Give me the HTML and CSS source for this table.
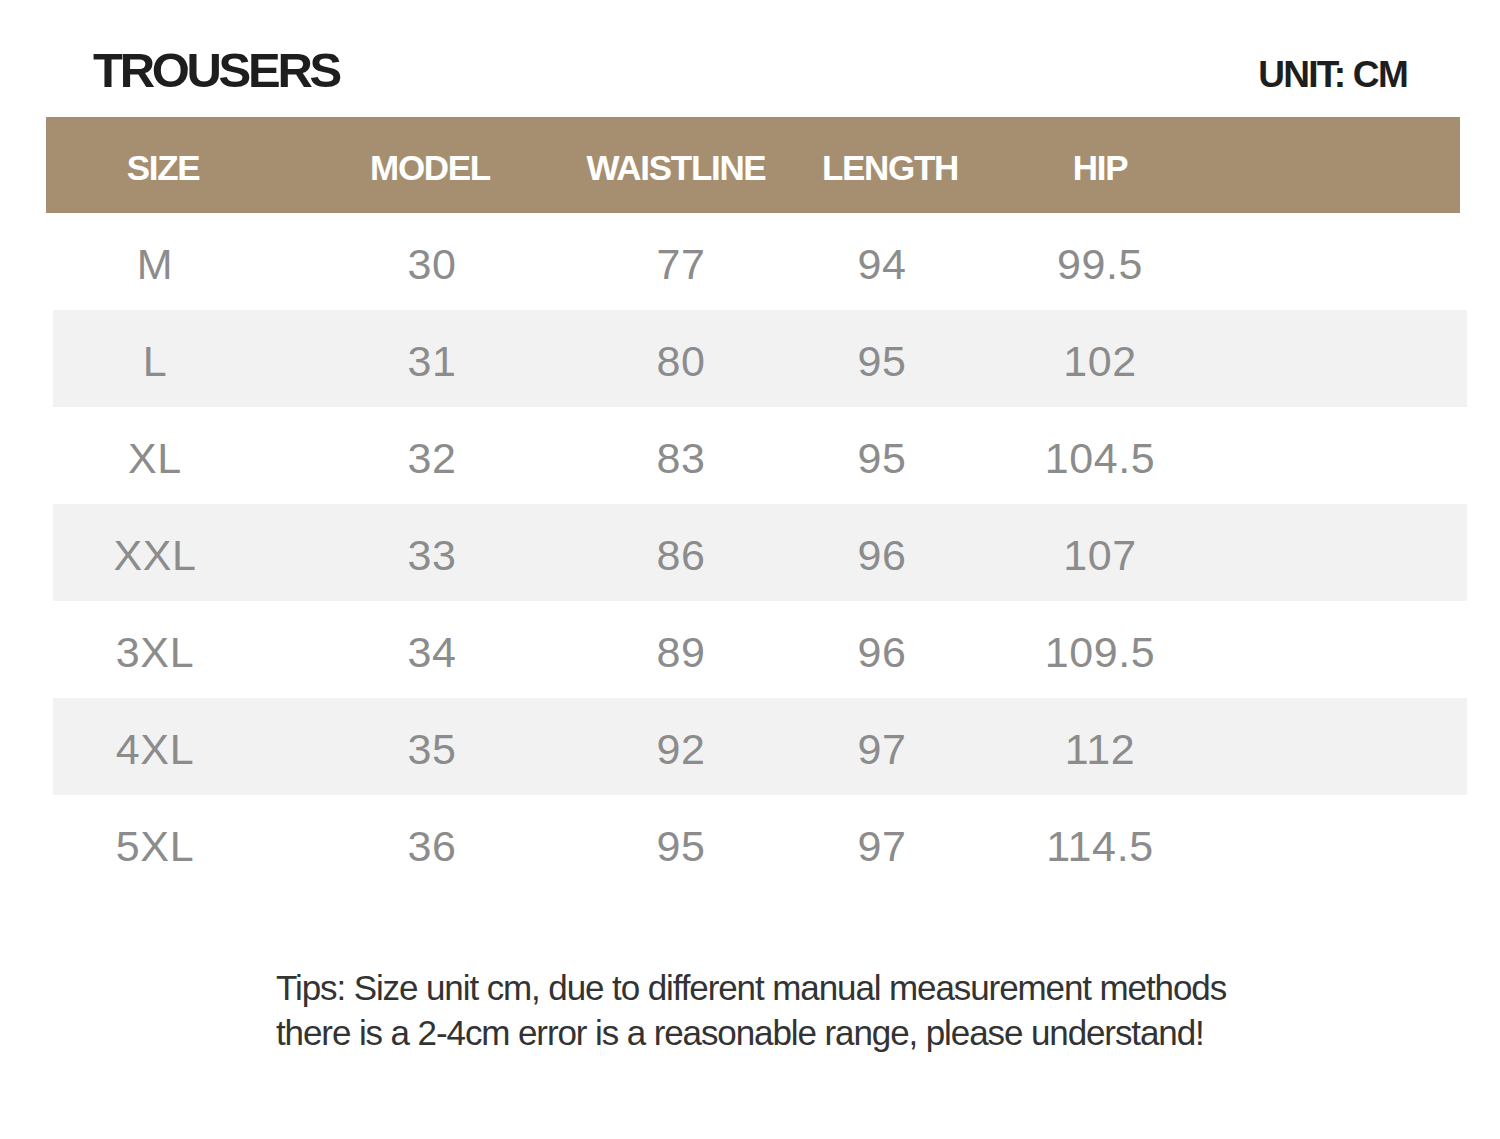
FILE: index.html
```html
<!DOCTYPE html>
<html>
<head>
<meta charset="utf-8">
<link rel="stylesheet" href="styles.css">
</head>
<body>
<div class="page">
  <div class="top">
    <h1 class="title">TROUSERS</h1>
    <div class="unit">UNIT: CM</div>
  </div>
  <div class="head">
    <span>SIZE</span><span>MODEL</span><span>WAISTLINE</span><span>LENGTH</span><span>HIP</span>
  </div>
  <div class="rows">
    <div class="row"><span>M</span><span>30</span><span>77</span><span>94</span><span>99.5</span></div>
    <div class="row alt"><span>L</span><span>31</span><span>80</span><span>95</span><span>102</span></div>
    <div class="row"><span>XL</span><span>32</span><span>83</span><span>95</span><span>104.5</span></div>
    <div class="row alt"><span>XXL</span><span>33</span><span>86</span><span>96</span><span>107</span></div>
    <div class="row"><span>3XL</span><span>34</span><span>89</span><span>96</span><span>109.5</span></div>
    <div class="row alt"><span>4XL</span><span>35</span><span>92</span><span>97</span><span>112</span></div>
    <div class="row"><span>5XL</span><span>36</span><span>95</span><span>97</span><span>114.5</span></div>
  </div>
  <p class="tips">Tips: Size unit cm, due to different manual measurement methods<br>there is a 2-4cm error is a reasonable range, please understand!</p>
</div>
</body>
</html>
```

FILE: styles.css
```css
html, body {
  margin: 0;
  padding: 0;
  background: #ffffff;
}
.page {
  width: 1500px;
  height: 1139px;
  font-family: "Liberation Sans", Arial, sans-serif;
  padding-top: 45px;
  box-sizing: border-box;
}
.top {
  display: flex;
  align-items: baseline;
  justify-content: space-between;
  padding: 0 93px 0 93px;
}
.title {
  margin: 0;
  font-size: 49px;
  line-height: 50px;
  font-weight: 700;
  color: #1e1e1e;
  letter-spacing: -3.3px;
}
.unit {
  font-size: 37px;
  line-height: 37px;
  font-weight: 700;
  color: #1e1e1e;
  letter-spacing: -1.7px;
}
.head {
  margin: 22px 0 0 46px;
  width: 1414px;
  height: 96px;
  background: #a68f71;
  display: grid;
  grid-template-columns: 234px 300px 192px 236px 184px 1fr;
  align-items: center;
  color: #ffffff;
  font-weight: 700;
  font-size: 35px;
  letter-spacing: -1.3px;
}
.head span {
  text-align: center;
  padding-top: 6px;
}
.rows {
  margin-left: 53px;
  width: 1414px;
}
.row {
  height: 97px;
  display: grid;
  grid-template-columns: 204px 350px 148px 254px 182px 1fr;
  align-items: center;
  color: #8c8c8c;
  font-size: 43px;
  letter-spacing: 0.6px;
}
.row span {
  text-align: center;
  padding-top: 5px;
}
.row.alt {
  background: #f2f2f3;
}
.tips {
  margin: 73px 0 0 276px;
  font-size: 35px;
  line-height: 45px;
  color: #333333;
  letter-spacing: -1.1px;
}
```
